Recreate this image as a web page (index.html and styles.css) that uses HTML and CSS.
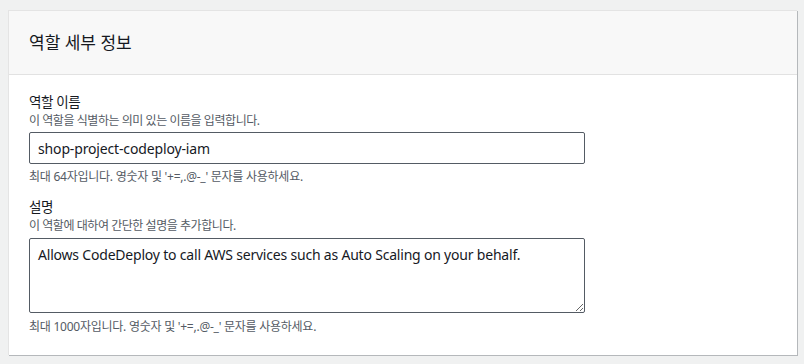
FILE: index.html
```html
<!DOCTYPE html>
<html lang="ko">
<head>
<meta charset="utf-8">
<link rel="stylesheet" href="styles.css">
</head>
<body>
<div class="card">
  <div class="card-header"><h2>역할 세부 정보</h2></div>
  <div class="card-body">
    <div class="field">
      <div class="label">역할 이름</div>
      <div class="desc">이 역할을 식별하는 의미 있는 이름을 입력합니다.</div>
      <input class="input" type="text" value="shop-project-codeploy-iam">
      <div class="hint">최대 64자입니다. 영숫자 및 '+=,.@-_' 문자를 사용하세요.</div>
    </div>
    <div class="field">
      <div class="label">설명</div>
      <div class="desc">이 역할에 대하여 간단한 설명을 추가합니다.</div>
      <textarea class="textarea">Allows CodeDeploy to call AWS services such as Auto Scaling on your behalf.</textarea>
      <div class="hint">최대 1000자입니다. 영숫자 및 '+=,.@-_' 문자를 사용하세요.</div>
    </div>
  </div>
</div>
</body>
</html>
```
FILE: styles.css
```css
* { box-sizing: border-box; }
html, body { margin: 0; padding: 0; }
body {
  background: #f0f1f1;
  font-family: "Noto Sans", "Noto Sans CJK KR", sans-serif;
  color: #16191f;
  width: 804px;
  height: 364px;
  overflow: hidden;
}
.card {
  margin: 10px 7px 0 8px;
  background: #fff;
  border-top: 1px solid #e4e4e4;
  border-left: 1px solid #e4e4e4;
  box-shadow: 1px 1px 0 #b5b8bb;
  height: 345px;
}
.card-header {
  background: #f8f8f8;
  border-bottom: 1px solid #e2e2e2;
  height: 64px;
  display: flex;
  align-items: center;
  padding: 0 20px;
}
.card-header h2 {
  margin: 0;
  font-size: 17px;
  font-weight: 400;
  line-height: 22px;
  color: #16191f;
}
.card-body {
  padding: 17px 20px 0;
  display: flex;
  flex-direction: column;
  gap: 12px;
}
.field { display: flex; flex-direction: column; }
.label {
  font-size: 13.5px;
  letter-spacing: -0.4px;
  line-height: 21px;
  color: #16191f;
}
.desc {
  font-size: 12px;
  letter-spacing: -0.45px;
  line-height: 16px;
  color: #545b64;
  margin-bottom: 3px;
}
.field + .field .desc { margin-bottom: 4px; }
.input, .textarea {
  display: block;
  width: 556px;
  border: 1px solid #545b64;
  border-radius: 2px;
  font-family: "Noto Sans", "Noto Sans CJK KR", sans-serif;
  font-size: 14px;
  color: #16191f;
  background: #fff;
  margin: 0;
}
.input {
  height: 32px;
  padding: 0 8px;
  letter-spacing: -0.15px;
}
.textarea {
  height: 75px;
  resize: vertical;
  line-height: 20px;
  padding: 6px 8px;
  letter-spacing: -0.2px;
}
.hint {
  font-size: 12px;
  letter-spacing: -0.25px;
  line-height: 16px;
  color: #545b64;
  margin-top: 5px;
}
.field + .field .hint { margin-top: 6px; }
```
